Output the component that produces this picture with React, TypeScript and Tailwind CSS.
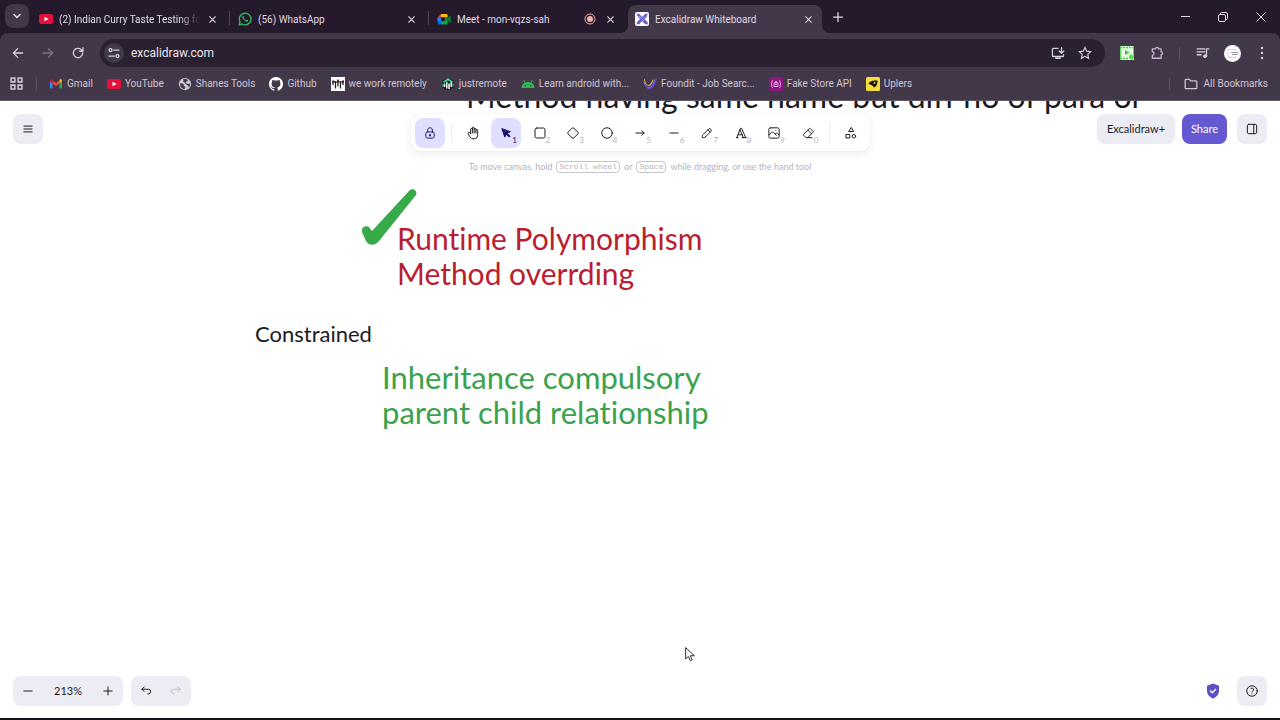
import type { ReactNode } from "react";

const chromeFont = "font-['Roboto','Open_Sans',sans-serif]";
const uiFont = "font-['Lato','Noto_Sans',sans-serif]";

type IconProps = { children: ReactNode; box?: number; className?: string };

function Icon({ children, box = 24, className = "size-[14px]" }: IconProps) {
  return (
    <svg
      viewBox={`0 0 ${box} ${box}`}
      className={`shrink-0 ${className}`}
      fill="none"
      stroke="currentColor"
      strokeWidth={box === 20 ? 1.4 : 1.7}
      strokeLinecap="round"
      strokeLinejoin="round"
      aria-hidden="true"
    >
      {children}
    </svg>
  );
}

/* Site icons */

function YoutubeIcon() {
  return (
    <svg viewBox="0 0 28 28" className="size-[14px] shrink-0">
      <rect x="0" y="4" width="28" height="20" rx="5" fill="#e5103c" />
      <path d="M11 9.500v9l8-4.500z" fill="#fff" />
    </svg>
  );
}

function WhatsappIcon() {
  return (
    <svg viewBox="0 0 24 24" className="size-[14px] shrink-0" fill="none" stroke="#35b562" strokeWidth="2.4">
      <path d="M2 22l1.500-5.300A10 10 0 1 1 7.300 20.600z" strokeLinejoin="round" />
      <path d="M8 7c-1.200 1-1 3 1 5.500s5 4.500 7 4c1.300-.400 1.800-1.500 1.500-2.200l-2.500-1.300-1.500 1.300c-1.800-.800-3-2-3.700-3.600l1-1.300L9.500 7z" fill="#35b562" stroke="none" />
    </svg>
  );
}

function MeetIcon() {
  return (
    <svg viewBox="0 0 28 28" className="size-[14px] shrink-0">
      <path d="M8 4L1 11h7z" fill="#ea4335" />
      <path d="M8 4h11a2 2 0 0 1 2 2v5h-6v0H8z" fill="#fbbc04" />
      <path d="M1 11h7v7H1z" fill="#2684fc" />
      <path d="M1 18h7v7H3a2 2 0 0 1-2-2z" fill="#0066da" />
      <path d="M8 18h7v-7l6 3v9a2 2 0 0 1-2 2H8z" fill="#00ac47" />
      <path d="M19 14.500l7-7c.700-.600 1.500-.200 1.500.700v12.600c0 .900-.800 1.300-1.500.700z" fill="#00832d" />
      <path d="M8 11h8v7H8z" fill="#241a2b" />
    </svg>
  );
}

function ExcalidrawIcon() {
  return (
    <svg viewBox="0 0 28 28" className="size-[14px] shrink-0">
      <rect width="28" height="28" rx="4" fill="#fff" />
      <path d="M3 3l6 1 5 6 6-6 5-1-1 6-5 5 6 6 1 5-6-1-6-6-5 6-6 1 1-5 6-6-5-6z" fill="#6860d0" />
      <path d="M8 8l10 10M20 9l-3 3" stroke="#fff" strokeWidth="1" />
    </svg>
  );
}

function GmailIcon() {
  return (
    <svg viewBox="0 0 28 28" className="size-[14px] shrink-0">
      <path d="M2 7l5 3.500V23H3.500A1.500 1.500 0 0 1 2 21.500z" fill="#4285f4" />
      <path d="M26 7l-5 3.500V23h3.500a1.500 1.500 0 0 0 1.500-1.500z" fill="#34a853" />
      <path d="M7 6.500l7 5.500 7-5.500v6.500l-7 5.500L7 13z" fill="#ea4335" />
      <path d="M2 7.500c0-3 3-3.500 5-2v7l-5-3.500z" fill="#c5221f" />
      <path d="M26 7.500c0-3-3-3.500-5-2v7l5-3.500z" fill="#fbbc04" />
    </svg>
  );
}

function GlobeIcon() {
  return (
    <svg viewBox="0 0 24 24" className="size-[14px] shrink-0">
      <circle cx="12" cy="12" r="10.500" fill="#cfc6d4" />
      <path d="M3.500 11c3-.500 6 .500 6.500 3s3 2 2.500 4l-1.500 3C6 20 3 16 3.500 11z" fill="#43384a" />
      <path d="M9 4c2-1 6-1 8 1l-1 2.500-3 .500 1 2.500 3 1.500 3.500-1c1 3-.500 5.500-2 7l-1-3-3.500-2-3-3.500L9 8z" fill="#43384a" />
    </svg>
  );
}

function GithubIcon() {
  return (
    <svg viewBox="0 0 16 16" className="size-[14px] shrink-0" fill="#fff">
      <path d="M8 0C3.580 0 0 3.580 0 8c0 3.540 2.290 6.530 5.470 7.590.4.070.55-.17.55-.38 0-.19-.01-.82-.01-1.490-2.010.37-2.530-.49-2.690-.94-.09-.23-.48-.94-.82-1.130-.28-.15-.68-.52-.01-.53.63-.01 1.080.58 1.230.82.72 1.210 1.870.87 2.330.66.07-.52.28-.87.51-1.070-1.780-.2-3.640-.89-3.640-3.950 0-.87.31-1.590.82-2.150-.08-.2-.36-1.020.08-2.120 0 0 .67-.21 2.200.82.64-.18 1.320-.27 2-.27s1.360.09 2 .27c1.530-1.040 2.200-.82 2.200-.82.44 1.100.16 1.920.08 2.120.51.56.82 1.270.82 2.150 0 3.070-1.870 3.750-3.650 3.950.29.25.54.73.54 1.480 0 1.070-.01 1.930-.01 2.200 0 .21.15.46.55.38A8.010 8.010 0 0 0 16 8c0-4.420-3.580-8-8-8z" />
    </svg>
  );
}

function RemoteIcon() {
  return (
    <svg viewBox="0 0 28 28" className="size-[14px] shrink-0">
      <rect width="28" height="28" fill="#fff" />
      <path d="M4 8v8M9 8v15M14 5v14M19 8v15M24 8v8" stroke="#221d26" strokeWidth="2.500" />
      <path d="M2.500 9h4M7 10h4M12 9h4M17 10h4M22 9h4" stroke="#221d26" strokeWidth="4" />
    </svg>
  );
}

function JustRemoteIcon() {
  return (
    <svg viewBox="0 0 28 28" className="size-[14px] shrink-0">
      <path d="M14 1l11 6v14l-11 6-11-6V7z" fill="#111b1c" />
      <path d="M3 10l11-8 11 8-4 1-7-4-7 4z" fill="#35d9a4" />
      <path d="M7 13v7M11.500 10v13M16 13v11M20.500 10v10" stroke="#fff" strokeWidth="3" />
      <path d="M4 14v6M24 13v6" stroke="#35d9a4" strokeWidth="2" />
    </svg>
  );
}

function AndroidIcon() {
  return (
    <svg viewBox="0 0 28 28" className="size-[14px] shrink-0">
      <path d="M1 22C1.500 15 6 10 14 10s12.500 5 13 12z" fill="#32b551" />
      <path d="M5 6l4 7M23 6l-4 7" stroke="#32b551" strokeWidth="2" />
      <circle cx="8.500" cy="17.500" r="1.400" fill="#43384a" />
      <circle cx="19.500" cy="17.500" r="1.400" fill="#43384a" />
    </svg>
  );
}

function FounditIcon() {
  return (
    <svg viewBox="0 0 28 28" className="size-[14px] shrink-0" fill="none" strokeWidth="2.200" strokeLinecap="round">
      <path d="M9 24c9 0 16-8 17-20" stroke="#7a35c8" strokeWidth="3" />
      <path d="M2 9c1 8 4 12 9 12s10-7 12-15" stroke="#4f7de0" />
      <path d="M3 5c1 8 4 12 8 12s7-6 9-11" stroke="#e6a74a" />
    </svg>
  );
}

function FakeStoreIcon() {
  return (
    <svg viewBox="0 0 28 28" className="size-[14px] shrink-0" fill="none" stroke="#efb7e8" strokeWidth="1.800">
      <rect width="28" height="28" rx="3" fill="#8d1682" stroke="none" />
      <path d="M8 7c-3 0-2 3-2 5l-2 2 2 2c0 2-1 5 2 5M20 7c3 0 2 3 2 5l2 2-2 2c0 2 1 5-2 5" />
      <path d="M10 12h8v7h-8zM12 12V9.500h4V12M12 15.500h4" />
    </svg>
  );
}

function UplersIcon() {
  return (
    <svg viewBox="0 0 28 28" className="size-[14px] shrink-0">
      <rect width="28" height="28" rx="3" fill="#f6dc3b" />
      <path d="M5 13c3-5 9-6 18-6 0 5-1 12-7 14-2-5-6-4-11-8z" fill="#17130c" />
      <circle cx="17" cy="12" r="1.800" fill="#f6dc3b" />
    </svg>
  );
}

/* Browser chrome */

function CloseIcon() {
  return (
    <svg viewBox="0 0 8 8" className="size-[7px]" fill="none" stroke="currentColor" strokeWidth="1.200">
      <path d="M.5.500l7 7M7.500.500l-7 7" />
    </svg>
  );
}

type TabProps = { icon: ReactNode; title: string; active?: boolean; recording?: boolean; faded?: boolean };

function Tab({ icon, title, active, recording, faded }: TabProps) {
  return (
    <div
      className={
        active
          ? "relative flex w-[194px] h-7 items-center gap-[6px] rounded-t-lg bg-[#43384a] pl-[7px] pr-2"
          : "flex w-[199px] h-7 items-center gap-[6px] pl-2 pr-3"
      }
    >
      {active && (
        <>
          <span className="absolute bottom-0 -left-2 size-2 bg-[radial-gradient(circle_at_0_0,#241a2b_8px,#43384a_8px)]" />
          <span className="absolute bottom-0 -right-2 size-2 bg-[radial-gradient(circle_at_100%_0,#241a2b_8px,#43384a_8px)]" />
        </>
      )}
      {icon}
      <span
        className={
          faded
            ? "min-w-0 flex-1 whitespace-nowrap [mask-image:linear-gradient(to_right,#000_85%,transparent)]"
            : "min-w-0 flex-1 overflow-hidden whitespace-nowrap"
        }
      >
        {title}
      </span>
      {recording && (
        <svg viewBox="0 0 12 12" className="size-3 shrink-0" fill="none" stroke="#f2b0aa">
          <circle cx="6" cy="6" r="5" />
          <circle cx="6" cy="6" r="3" fill="#f2b0aa" stroke="none" />
        </svg>
      )}
      <button aria-label={`Close ${title}`} className={recording ? "ml-[2px] flex size-3 items-center justify-center" : "flex size-3 items-center justify-center"}>
        <CloseIcon />
      </button>
    </div>
  );
}

function TabDivider() {
  return <span className="mb-2 -ml-px h-[14px] w-px bg-[#4f4457]" />;
}

function TabStrip() {
  return (
    <div className="flex h-[33px] items-end bg-[#241a2b]">
      <button aria-label="Search tabs" className="mb-[5px] ml-[5px] mr-[2px] flex size-6 items-center justify-center rounded-lg bg-[#43384a]">
        <Icon className="size-3">
          <path d="M6 9l6 6 6-6" strokeWidth="3" />
        </Icon>
      </button>
      <Tab icon={<YoutubeIcon />} title="(2) Indian Curry Taste Testing fo" faded />
      <TabDivider />
      <Tab icon={<WhatsappIcon />} title="(56) WhatsApp" />
      <TabDivider />
      <Tab icon={<MeetIcon />} title="Meet - mon-vqzs-sah" recording />
      <Tab icon={<ExcalidrawIcon />} title="Excalidraw Whiteboard" active />
      <button aria-label="New tab" className="mb-1 ml-1 flex size-6 items-center justify-center">
        <Icon className="size-3">
          <path d="M12 3v18M3 12h18" strokeWidth="2.500" />
        </Icon>
      </button>
      <div className="ml-auto flex h-[33px] items-center">
        <button aria-label="Minimize" className="flex w-[38px] justify-center">
          <svg viewBox="0 0 9 9" className="size-[9px]" stroke="currentColor"><path d="M0 4.500h9" /></svg>
        </button>
        <button aria-label="Restore" className="flex w-[38px] justify-center">
          <svg viewBox="0 0 10 10" className="size-[10px]" fill="none" stroke="currentColor">
            <rect x=".5" y="2.500" width="7" height="7" rx="1.500" />
            <path d="M2.500 2.500V1.500a1 1 0 0 1 1-1H8A1.500 1.500 0 0 1 9.500 2v4.500a1 1 0 0 1-1 1h-1" />
          </svg>
        </button>
        <button aria-label="Close window" className="flex w-[38px] justify-center">
          <svg viewBox="0 0 10 10" className="size-[10px]" stroke="currentColor"><path d="M.5.500l9 9M9.500.500l-9 9" /></svg>
        </button>
      </div>
    </div>
  );
}

function AddressBar() {
  return (
    <div className="flex h-[34px] items-center pt-[6px] pl-[11px] pr-[11px] text-[#d9d0de]">
      <button aria-label="Back" className="mr-4">
        <Icon><path d="M20 12H4M11.500 4.500L4 12l7.500 7.500" strokeWidth="2.200" /></Icon>
      </button>
      <button aria-label="Forward" className="mr-4 text-[#7e7285]">
        <Icon><path d="M4 12h16M12.500 4.500L20 12l-7.500 7.500" strokeWidth="2.200" /></Icon>
      </button>
      <button aria-label="Reload" className="mr-[15px]">
        <Icon><path d="M20 12a8 8 0 1 1-2.500-5.800L20 8.500M20.500 3v6h-6" strokeWidth="2.200" /></Icon>
      </button>
      <div className="flex h-7 flex-1 items-center rounded-full bg-[#2a2030] pl-1 pr-[13px]">
        <button aria-label="Site information" className="mr-[7px] flex size-5 items-center justify-center rounded-full bg-[#43384a]">
          <Icon className="size-3">
            <path d="M11 6h11M2 18h11" strokeWidth="2.500" />
            <circle cx="5" cy="6" r="3" strokeWidth="2.500" />
            <circle cx="19" cy="18" r="3" strokeWidth="2.500" />
          </Icon>
        </button>
        <input aria-label="Address" defaultValue="excalidraw.com" className="min-w-0 flex-1 bg-transparent text-xs text-[#e9e2ed] outline-none" />
        <button aria-label="Install" className="mr-[13px]">
          <Icon><path d="M12 4H4a1.500 1.500 0 0 0-1.500 1.500v11A1.500 1.500 0 0 0 4 18h16a1.500 1.500 0 0 0 1.500-1.500V15M8 21h8M18 3v9M14 8.500l4 4 4-4" strokeWidth="2.200" /></Icon>
        </button>
        <button aria-label="Bookmark this page">
          <Icon><path d="M12 2.500l2.900 6.300 6.900.8-5.100 4.700 1.400 6.800-6.100-3.400-6.100 3.400 1.400-6.800-5.100-4.700 6.900-.8z" strokeWidth="2" strokeLinejoin="miter" /></Icon>
        </button>
      </div>
      <div className="flex items-center pl-[15px]">
        <button aria-label="Screen recorder" className="mr-4">
          <svg viewBox="0 0 28 28" className="size-[14px]">
            <rect width="28" height="28" fill="#e8ffe3" />
            <path d="M0 3h28M0 25h18" stroke="#43c744" strokeWidth="3" strokeDasharray="4 2" />
            <path d="M10 8v10l9-5z" fill="#3cc83d" />
            <path d="M1 0v28M27 0v18" stroke="#55dc52" strokeWidth="2" />
            <circle cx="23" cy="22" r="5" fill="#55e04e" />
          </svg>
        </button>
        <button aria-label="Extensions" className="mr-[15px] text-[#c9b4d4]">
          <Icon><path d="M4 5h5.500a2.500 2.500 0 0 1 5 0H19v5a2.500 2.500 0 0 1 0 5v6H4v-5a3 3 0 0 0 0-6z" strokeWidth="2.200" /></Icon>
        </button>
        <span className="mr-4 h-3 w-px bg-[#5d5165]" />
        <button aria-label="Media controls" className="mr-[14px]">
          <Icon>
            <path d="M2 5h13M2 10h13M2 15h7M18 17V5h4" strokeWidth="2.200" />
            <circle cx="15.500" cy="17.500" r="2.500" fill="currentColor" />
          </Icon>
        </button>
        <button aria-label="Profile" className="mr-[14px]">
          <svg viewBox="0 0 34 34" className="size-[17px]">
            <circle cx="17" cy="17" r="17" fill="#fff" />
            <path d="M23 12V9H8v16h15v-3" fill="none" stroke="#c9c6cc" strokeWidth="1.500" />
            <path d="M14 15h14M16 19h12" stroke="#77737a" strokeWidth="1.500" />
          </svg>
        </button>
        <button aria-label="Menu">
          <svg viewBox="0 0 14 14" className="size-[14px]" fill="currentColor">
            <circle cx="7" cy="2" r="1.200" />
            <circle cx="7" cy="7" r="1.200" />
            <circle cx="7" cy="12" r="1.200" />
          </svg>
        </button>
      </div>
    </div>
  );
}

const bookmarks = [
  { label: "Gmail", icon: <GmailIcon /> },
  { label: "YouTube", icon: <YoutubeIcon /> },
  { label: "Shanes Tools", icon: <GlobeIcon /> },
  { label: "Github", icon: <GithubIcon /> },
  { label: "we work remotely", icon: <RemoteIcon /> },
  { label: "justremote", icon: <JustRemoteIcon /> },
  { label: "Learn android with...", icon: <AndroidIcon /> },
  { label: "Foundit - Job Searc...", icon: <FounditIcon /> },
  { label: "Fake Store API", icon: <FakeStoreIcon /> },
  { label: "Uplers", icon: <UplersIcon /> },
];

function BookmarkBar() {
  return (
    <div className="flex h-[33px] items-center pl-[10px] pr-3 text-[#cfc5d5]">
      <button aria-label="Apps" className="mr-[13px]">
        <Icon className="size-[13px]">
          <path d="M2 2h7v7H2zM15 2h7v7h-7zM2 15h7v7H2zM15 15h7v7h-7z" strokeWidth="2.800" strokeLinejoin="miter" />
        </Icon>
      </button>
      <span className="mr-3 h-3 w-px bg-[#5d5165]" />
      <nav className="flex items-center gap-[14px]">
        {bookmarks.map((b) => (
          <a key={b.label} href="#" className="flex items-center gap-1 whitespace-nowrap">
            {b.icon}
            {b.label}
          </a>
        ))}
      </nav>
      <span className="ml-auto mr-[14px] h-3 w-px bg-[#5d5165]" />
      <a href="#" className="flex items-center gap-[6px] whitespace-nowrap">
        <Icon><path d="M2 5.500A1.500 1.500 0 0 1 3.500 4H9l2.500 2.500h9A1.500 1.500 0 0 1 22 8v10.500a1.500 1.500 0 0 1-1.500 1.500h-17A1.500 1.500 0 0 1 2 18.500z" strokeWidth="2.200" /></Icon>
        All Bookmarks
      </a>
    </div>
  );
}

/* Whiteboard */

const tools = [
  { name: "Hand", icon: <Icon><path d="M8 13V5.500a1.500 1.500 0 0 1 3 0V12M11 5.500v-2a1.500 1.500 0 1 1 3 0V12M14 5.500a1.500 1.500 0 0 1 3 0V12M17 7.500a1.500 1.500 0 0 1 3 0V16a6 6 0 0 1-6 6h-2 .208a6 6 0 0 1-5.012-2.700L7 19c-.312-.479-1.407-2.388-3.286-5.728a1.500 1.500 0 0 1 .536-2.022 1.867 1.867 0 0 1 2.280.280L8 13" /></Icon> },
  {
    name: "Selection",
    key: "1",
    active: true,
    icon: <Icon><path d="M5 5l5 14 2.500-5 5 5 1.500-1.500-5-5 5-2.500z" fill="currentColor" /></Icon>,
  },
  { name: "Rectangle", key: "2", icon: <Icon><rect x="3.500" y="3.500" width="17" height="17" rx="2.500" /></Icon> },
  { name: "Diamond", key: "3", icon: <Icon><path d="M10.500 20.400l-6.900-6.900c-.781-.781-.781-2.219 0-3l6.900-6.900c.781-.781 2.219-.781 3 0l6.900 6.900c.781.781.781 2.219 0 3l-6.900 6.900c-.781.781-2.219.781-3 0z" /></Icon> },
  { name: "Ellipse", key: "4", icon: <Icon><circle cx="12" cy="12" r="9" /></Icon> },
  { name: "Arrow", key: "5", icon: <Icon><path d="M5 12h14M15 16l4-4-4-4" /></Icon> },
  { name: "Line", key: "6", icon: <Icon><path d="M5 12h14" /></Icon> },
  { name: "Draw", key: "7", icon: <Icon box={20}><path d="M7.643 15.690l7.774-7.773a2.357 2.357 0 1 0-3.334-3.334L4.310 12.357a3.333 3.333 0 0 0-.977 2.357v1.953h1.953c.884 0 1.732-.352 2.357-.977zM11.250 5.417l3.333 3.333" /></Icon> },
  { name: "Text", key: "8", icon: <Icon><path d="M4 20h3M14 20h7M6.900 15h6.900M10.200 6.300L16 20M5 20l6-16h2l7 16" /></Icon> },
  { name: "Image", key: "9", icon: <Icon box={20}><path d="M12.500 6.667h.01M4.910 2.625h10.180a2.284 2.284 0 0 1 2.285 2.284v10.182a2.284 2.284 0 0 1-2.284 2.284H4.909a2.284 2.284 0 0 1-2.284-2.284V4.909a2.284 2.284 0 0 1 2.284-2.284zM3.333 12.500l3.334-3.333c.773-.745 1.726-.745 2.500 0l4.166 4.166M11.667 11.667l.833-.834c.774-.744 1.726-.744 2.500 0l1.667 1.667" /></Icon> },
  { name: "Eraser", key: "0", icon: <Icon><path d="M19 20H8.500l-4.210-4.300a1 1 0 0 1 0-1.410l10-10a1 1 0 0 1 1.410 0l5 5a1 1 0 0 1 0 1.410l-9.200 9.300M18 13.300L11.700 7" /></Icon> },
];

function Toolbar() {
  return (
    <div className="flex h-[37px] items-center rounded-lg bg-white px-1 shadow-[0_0_1px_rgba(0,0,0,0.18),0_4px_10px_rgba(0,0,0,0.06)]">
      <button aria-label="Keep tool active" className="flex size-[30px] items-center justify-center rounded-lg bg-[#e0dfff] text-[#201567]">
        <Icon box={20}>
          <path d="M13.542 8.542H6.458a2.500 2.500 0 0 0-2.500 2.500v3.750a2.500 2.500 0 0 0 2.500 2.500h7.084a2.500 2.500 0 0 0 2.500-2.500v-3.750a2.500 2.500 0 0 0-2.500-2.500zM10 13.958a1.042 1.042 0 1 0 0-2.083 1.042 1.042 0 0 0 0 2.083zM6.667 8.333V5.417C6.667 3.806 8.159 2.500 10 2.500s3.333 1.306 3.333 2.917v2.916" />
        </Icon>
      </button>
      <span className="mx-[6px] h-5 w-px bg-[#ededf2]" />
      <div className="flex w-[365px] justify-between">
        {tools.map((t) => (
          <button
            key={t.name}
            aria-label={t.name}
            className={
              t.active
                ? "relative flex size-[30px] items-center justify-center rounded-lg bg-[#e0dfff] text-[#180d72]"
                : "relative flex size-[30px] items-center justify-center rounded-lg text-[#1b1b1f]"
            }
          >
            {t.icon}
            {t.key && (
              <span className={t.active ? "absolute right-1 bottom-[2px] text-[8px] leading-3" : "absolute right-1 bottom-[2px] text-[8px] leading-3 text-[#b5b5ba]"}>
                {t.key}
              </span>
            )}
          </button>
        ))}
      </div>
      <span className="mx-[6px] h-5 w-px bg-[#ededf2]" />
      <button aria-label="More tools" className="flex size-[30px] items-center justify-center text-[#1b1b1f]">
        <Icon>
          <path d="M12 3l-4 6.500h8zM4 14.500h6v6H4z" />
          <circle cx="17" cy="17.500" r="3" />
        </Icon>
      </button>
    </div>
  );
}

function CanvasContent() {
  return (
    <div className="absolute inset-0 overflow-hidden font-['Lato','Noto_Sans',sans-serif] text-[31px] leading-[35px] whitespace-nowrap [font-variant-ligatures:none]">
      <p className="absolute left-[466px] -top-[23px] text-[32px] text-[#1b1b1f]">Method having same name but diff no of para or</p>
      <svg viewBox="0 0 60 60" className="absolute left-[359px] top-[85px] size-[60px]" fill="#37ab49">
        <path d="M3 46c-1-5 4-7 7-5l3 4L50 5c3-4 9-1 7 4L20 55c-4 5-10 5-13 0z" />
      </svg>
      <p className="absolute left-[397px] top-[120px] text-[30px] text-[#b9202f]">
        Runtime Polymorphism
        <br />
        Method overrding
      </p>
      <p className="absolute left-[255px] top-[215px] text-[22px] text-[#1b1b1f]">Constrained</p>
      <p className="absolute left-[382px] top-[259px] text-[#3ba24c]">
        Inheritance compulsory
        <br />
        parent child relationship
      </p>
      <svg viewBox="0 0 16 24" className="absolute left-[685px] top-[546px] h-[15px] w-[10px]">
        <path d="M1 1v18l4.500-4 3 7 3-1.500-3-6.500H15z" fill="#fff" stroke="#222" strokeWidth="1.500" />
      </svg>
    </div>
  );
}

function Whiteboard() {
  return (
    <main className={`relative flex min-h-0 flex-1 flex-col border-b-2 border-[#141217] bg-white text-xs text-[#1b1b1f] ${uiFont}`}>
      <CanvasContent />
      <header className="relative grid grid-cols-[1fr_auto_1fr] items-start pt-[13px] pl-[13px] pr-[13px]">
        <button aria-label="Main menu" className="flex size-[30px] items-center justify-center rounded-lg bg-[#ececf4]">
          <Icon><path d="M5 7h14M5 12h14M5 17h14" /></Icon>
        </button>
        <div className="flex flex-col items-center">
          <Toolbar />
          <p className="mt-2 flex items-center gap-1 text-[9px] leading-4 whitespace-nowrap text-[#b5b5ba]">
            To move canvas, hold
            <kbd className="rounded-sm border border-[#c5c5ca] px-[2px] font-['Liberation_Mono',monospace] text-[8px] leading-[10px]">Scroll wheel</kbd>
            or
            <kbd className="rounded-sm border border-[#c5c5ca] px-[2px] font-['Liberation_Mono',monospace] text-[8px] leading-[10px]">Space</kbd>
            while dragging, or use the hand tool
          </p>
        </div>
        <div className="flex items-center justify-end text-[11px]">
          <a href="#" className="mr-[7px] flex h-[30px] w-[78px] items-center justify-center rounded-lg bg-[#ececf4]">Excalidraw+</a>
          <button className="mr-[10px] h-[30px] w-[45px] rounded-lg bg-[#6559d2] text-white">Share</button>
          <button aria-label="Sidebar" className="flex size-[30px] items-center justify-center rounded-lg bg-[#ececf4]">
            <Icon>
              <rect x="4" y="4" width="16" height="16" rx="2.500" />
              <path d="M15 4v16" />
            </Icon>
          </button>
        </div>
      </header>
      <footer className="relative mt-auto flex items-center pb-3 pl-[13px] pr-[13px]">
        <div className="mr-2 flex h-[30px] w-[110px] items-center justify-between rounded-lg bg-[#ececf4] px-2">
          <button aria-label="Zoom out">
            <Icon><path d="M5 12h14" /></Icon>
          </button>
          <button aria-label="Reset zoom" className="text-[11px]">213%</button>
          <button aria-label="Zoom in">
            <Icon><path d="M12 5v14M5 12h14" /></Icon>
          </button>
        </div>
        <div className="flex h-[30px] w-[60px] items-center justify-around rounded-lg bg-[#ececf4]">
          <button aria-label="Undo">
            <Icon box={20}><path d="M7.500 10.833L4.167 7.500 7.500 4.167M4.167 7.500h9.166a3.333 3.333 0 0 1 0 6.667H12.500" /></Icon>
          </button>
          <button aria-label="Redo" disabled className="text-[#bdbdc4]">
            <Icon box={20}><path d="M12.500 10.833l3.333-3.333L12.500 4.167M15.833 7.500H6.667a3.333 3.333 0 1 0 0 6.667H7.500" /></Icon>
          </button>
        </div>
        <a href="#" aria-label="Encrypted" className="mr-[17px] ml-auto">
          <svg viewBox="0 0 28 32" className="h-4 w-[14px]">
            <path d="M14 1l12 4.500V15c0 8-5 13-12 16C7 28 2 23 2 15V5.500z" fill="#5b50c4" />
            <path d="M8 15l4.500 4.500L20 12" fill="none" stroke="#fff" strokeWidth="2.800" />
          </svg>
        </a>
        <button aria-label="Help" className="flex size-[30px] items-center justify-center rounded-lg bg-[#ececf4]">
          <Icon>
            <circle cx="12" cy="12" r="9" />
            <path d="M12 17v.01M12 13.500a1.500 1.500 0 0 1 1-1.500 2.600 2.600 0 1 0-3-4" />
          </Icon>
        </button>
      </footer>
    </main>
  );
}

export default function App() {
  return (
    <div className="flex h-screen flex-col">
      <header className={`border-b border-[#5f5666] bg-[#241a2b] text-[10px] text-[#e0d8e5] ${chromeFont}`}>
        <TabStrip />
        <div className="rounded-t-lg bg-[#43384a]">
          <AddressBar />
          <BookmarkBar />
        </div>
      </header>
      <Whiteboard />
    </div>
  );
}
